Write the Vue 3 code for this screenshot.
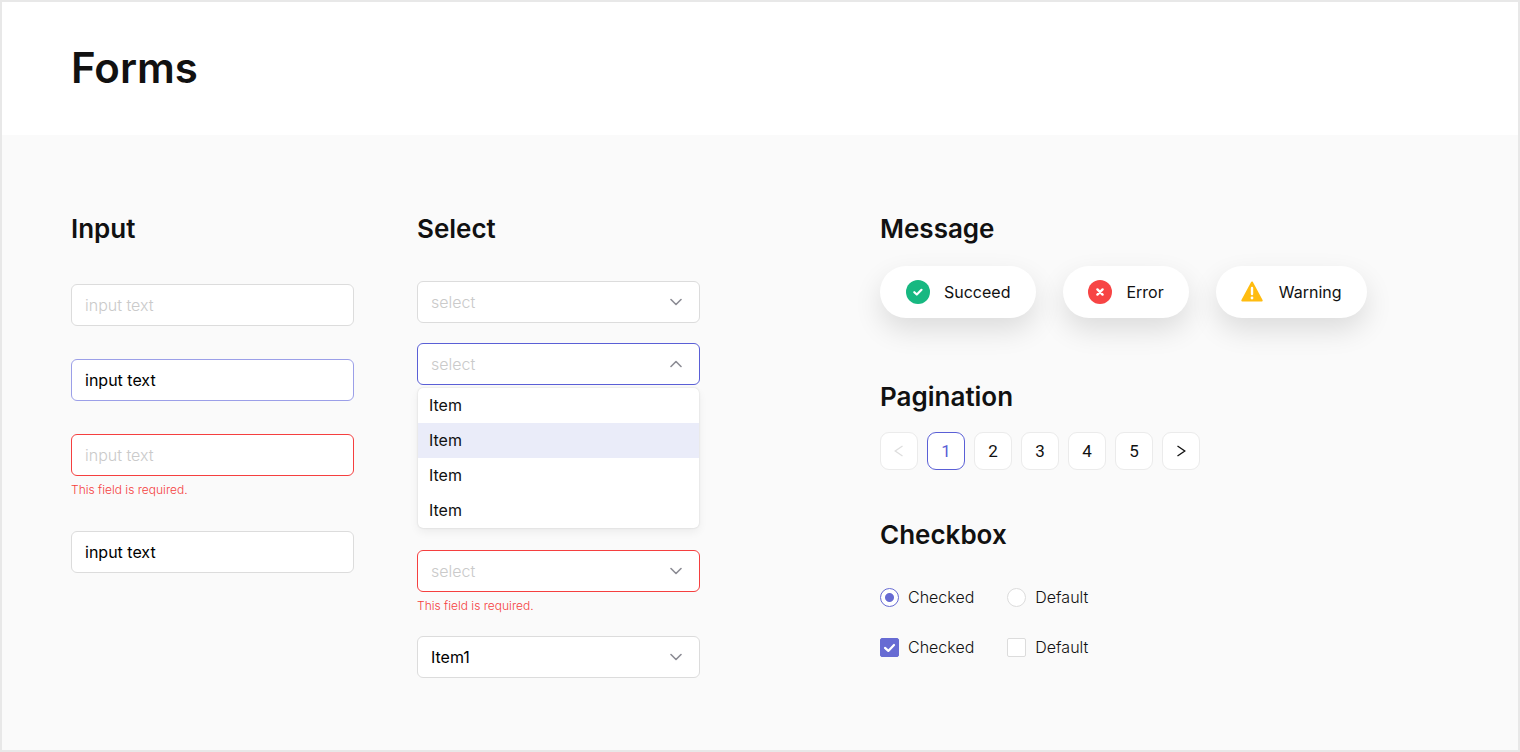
<script setup>
import { ref } from 'vue'

const inputs = ref([
  { id: 'input-empty', label: 'Empty input', value: '', state: '' },
  { id: 'input-focus', label: 'Focused input', value: 'input text', state: 'focus' },
  { id: 'input-error', label: 'Required input', value: '', state: 'error' },
  { id: 'input-filled', label: 'Filled input', value: 'input text', state: '' }
])

const selects = ref([
  { id: 'select-empty', label: 'Empty select', value: '', state: '' },
  { id: 'select-open', label: 'Open select', value: '', state: 'open' },
  { id: 'select-error', label: 'Required select', value: '', state: 'error' },
  { id: 'select-filled', label: 'Filled select', value: 'Item1', state: '' }
])

const active = ref(1)
const page = ref(1)
const radio = ref('checked')
const checkA = ref(true)
const checkB = ref(false)
</script>

<template>
  <div class="page">
    <header class="header">
      <h1>Forms</h1>
    </header>

    <main class="board">
      <section>
        <h2>Input</h2>
        <div class="inputs">
          <div v-for="f in inputs" :key="f.id">
            <input
              :id="f.id"
              v-model="f.value"
              class="control"
              :class="f.state"
              type="text"
              placeholder="input text"
              :aria-label="f.label"
            />
            <p v-if="f.state === 'error'" class="hint">This field is required.</p>
          </div>
        </div>
      </section>

      <section>
        <h2>Select</h2>
        <div class="selects">
          <div v-for="f in selects" :key="f.id">
            <div class="select-wrap">
              <select
                :id="f.id"
                v-model="f.value"
                class="control"
                :class="[f.state, { empty: !f.value }]"
                :aria-label="f.label"
              >
                <option value="" disabled>select</option>
                <option value="Item1">Item1</option>
              </select>
              <svg class="chevron" viewBox="0 0 12 8" aria-hidden="true">
                <path :d="f.state === 'open' ? 'M1 6.5 6 1.5l5 5' : 'M1 1.5l5 5 5-5'" />
              </svg>
            </div>
            <ul v-if="f.state === 'open'" class="menu" role="listbox" aria-label="Items">
              <li
                v-for="n in 4"
                :key="n"
                role="option"
                :aria-selected="active === n - 1"
                :class="{ active: active === n - 1 }"
                @mouseenter="active = n - 1"
              >Item</li>
            </ul>
            <p v-if="f.state === 'error'" class="hint">This field is required.</p>
          </div>
        </div>
      </section>

      <section>
        <h2>Message</h2>
        <div class="messages">
          <div class="message" role="status">
            <svg viewBox="0 0 24 24" aria-hidden="true">
              <circle cx="12" cy="12" r="12" fill="#17b881" />
              <path d="M8.3 12.2l2.5 2.3 4.7-4.7" fill="none" stroke="#fff" stroke-width="2.2" stroke-linecap="round" stroke-linejoin="round" />
            </svg>
            Succeed
          </div>
          <div class="message" role="status">
            <svg viewBox="0 0 24 24" aria-hidden="true">
              <circle cx="12" cy="12" r="12" fill="#f74444" />
              <path d="M9.4 9.4l5.2 5.2M14.6 9.4l-5.2 5.2" fill="none" stroke="#fff" stroke-width="2.4" stroke-linecap="round" />
            </svg>
            Error
          </div>
          <div class="message" role="status">
            <svg viewBox="0 0 24 24" aria-hidden="true">
              <path d="M11 2.5 20.700 20.500H1.300z" fill="#ffbc10" stroke="#ffbc10" stroke-width="2" stroke-linejoin="round" />
              <path d="M11 8v6" stroke="#fff" stroke-width="2.4" stroke-linecap="round" />
              <circle cx="11" cy="18" r="1.4" fill="#fff" />
            </svg>
            Warning
          </div>
        </div>

        <h2>Pagination</h2>
        <nav class="pagination" aria-label="Pagination">
          <button type="button" disabled aria-label="Previous page">
            <svg viewBox="0 0 10 12" aria-hidden="true"><path d="M8.5 1 1.2 6l7.3 5" /></svg>
          </button>
          <button
            v-for="n in 5"
            :key="n"
            type="button"
            :class="{ current: page === n }"
            :aria-current="page === n ? 'page' : undefined"
            @click="page = n"
          >{{ n }}</button>
          <button type="button" aria-label="Next page">
            <svg viewBox="0 0 10 12" aria-hidden="true"><path d="M1.5 1 8.8 6l-7.3 5" /></svg>
          </button>
        </nav>

        <h2>Checkbox</h2>
        <div class="choices">
          <label><input v-model="radio" type="radio" name="choice" value="checked" />Checked</label>
          <label><input v-model="radio" type="radio" name="choice" value="default" />Default</label>
          <label>
            <span class="tick">
              <input v-model="checkA" type="checkbox" />
              <svg v-if="checkA" viewBox="0 0 19 19" aria-hidden="true"><path d="M5 9.9l3.3 3L14 7" /></svg>
            </span>
            Checked
          </label>
          <label>
            <span class="tick">
              <input v-model="checkB" type="checkbox" />
              <svg v-if="checkB" viewBox="0 0 19 19" aria-hidden="true"><path d="M5 9.9l3.3 3L14 7" /></svg>
            </span>
            Default
          </label>
        </div>
      </section>
    </main>
  </div>
</template>

<style>
body {
  background: #fafafa;
}
</style>

<style scoped>
* {
  box-sizing: border-box;
}

.page {
  min-height: 100vh;
  border: 2px solid #e8e8e8;
  background: #fafafa;
  color: #111;
  font-family: Inter, "Liberation Sans", sans-serif;
  font-size: 16px;
  line-height: 24px;
}

.header {
  padding: 38px 69px 39px;
  background: #fff;
}

h1,
h2,
p,
ul {
  margin: 0;
  padding: 0;
}

h1 {
  font-size: 42px;
  font-weight: 600;
  line-height: 56px;
}

h2 {
  font-size: 26px;
  font-weight: 600;
  line-height: 36px;
}

.board {
  display: grid;
  grid-template-columns: minmax(0, 346fr) minmax(0, 463fr) minmax(0, 569fr);
  padding: 76px 69px 70px;
}

.inputs,
.selects {
  display: grid;
  max-width: 283px;
}

.inputs {
  gap: 33px;
  margin-top: 37px;
}

.selects {
  gap: 20px;
  margin-top: 34px;
}

.control {
  display: block;
  width: 100%;
  height: 42px;
  margin: 0;
  padding: 0 13px;
  border: 1px solid #dcdcdc;
  border-radius: 6px;
  outline: none;
  background: #fff;
  color: #000;
  font: inherit;
  appearance: none;
}

.control::placeholder,
.control.empty {
  color: #cacaca;
  font-weight: 300;
  opacity: 1;
}

.control.focus {
  border-color: #9b9fe8;
}

.control.open {
  border-color: #5a5fd6;
}

.control.error {
  border-color: #f53f3f;
}

.select-wrap {
  position: relative;
}

.chevron {
  position: absolute;
  top: 17px;
  right: 18px;
  width: 12px;
  height: 8px;
  pointer-events: none;
}

.chevron path {
  fill: none;
  stroke: #8c8c94;
  stroke-width: 1.6;
  stroke-linecap: round;
  stroke-linejoin: round;
}

.menu {
  overflow: hidden;
  margin: 3px 1px 2px;
  border-radius: 5px;
  background: #fff;
  box-shadow: 0 0 2px rgba(0, 0, 0, 0.16), 0 4px 10px rgba(0, 0, 0, 0.06);
  list-style: none;
}

.menu li {
  padding: 0 11px;
  line-height: 35px;
}

.menu li.active {
  background: #eaecf9;
}

.hint {
  padding-top: 6px;
  color: #f53f3f;
  font-size: 12px;
  font-weight: 300;
  line-height: 16px;
}

.selects .hint {
  padding-bottom: 2px;
}

.messages {
  display: flex;
  flex-wrap: wrap;
  gap: 27px;
  margin: 19px 0 61px;
}

.message {
  display: flex;
  align-items: center;
  gap: 14px;
  height: 52px;
  padding: 0 25px;
  border-radius: 26px;
  background: #fff;
  box-shadow: 0 12px 28px rgba(0, 0, 0, 0.12);
}

.message:first-child {
  padding: 0 26px;
}

.message svg {
  width: 24px;
  height: 24px;
}

.pagination {
  display: flex;
  gap: 9px;
  margin: 17px 0 47px;
}

.pagination button {
  display: grid;
  place-items: center;
  width: 38px;
  height: 38px;
  padding: 0;
  border: 1px solid #ebebeb;
  border-radius: 9px;
  background: #fff;
  color: #111;
  font-family: Roboto, sans-serif;
  font-size: 17px;
}

.pagination button.current {
  border-color: #5a5fd6;
  color: #5a5fd6;
}

.pagination button:disabled {
  color: #dedede;
}

.pagination svg {
  width: 10px;
  height: 12px;
  fill: none;
  stroke: currentColor;
  stroke-width: 1.3;
}

.choices {
  display: grid;
  grid-template-columns: max-content max-content;
  gap: 26px 33px;
  margin-top: 32px;
  font-weight: 300;
}

.choices label {
  display: flex;
  align-items: center;
  gap: 9px;
}

.choices input {
  display: block;
  width: 19px;
  height: 19px;
  margin: 0;
  border: 1px solid #dcdcdc;
  background: #fff;
  appearance: none;
}

.choices input[type="radio"] {
  border-radius: 50%;
}

.choices input[type="radio"]:checked {
  border-color: #676bd3;
  background: radial-gradient(circle, #676bd3 4px, #fff 5px);
}

.choices input[type="checkbox"] {
  border-radius: 2px;
}

.choices input[type="checkbox"]:checked {
  border-color: #676bd3;
  background: #676bd3;
}

.tick {
  position: relative;
}

.tick svg {
  position: absolute;
  inset: 0;
  fill: none;
  stroke: #fff;
  stroke-width: 2.2;
  stroke-linecap: round;
  stroke-linejoin: round;
  pointer-events: none;
}
</style>
